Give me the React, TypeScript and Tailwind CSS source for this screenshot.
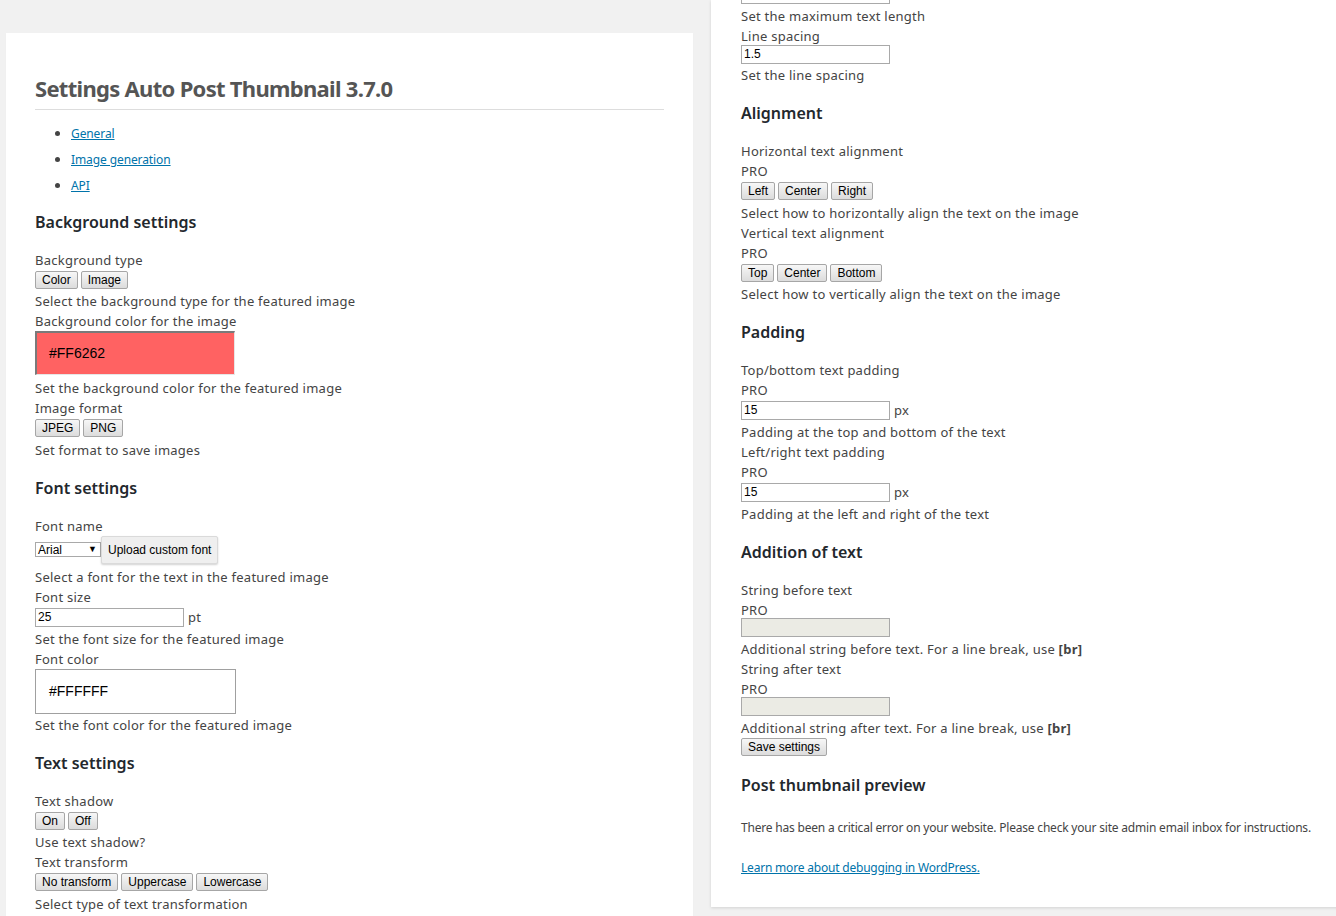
import React from 'react';

const body = "font-['Noto_Sans',sans-serif]";
const arial = "font-['Liberation_Sans',Arial,sans-serif]";

const Line: React.FC<{ children: React.ReactNode }> = ({ children }) => (
  <div className="h-5 leading-5 whitespace-nowrap tracking-[0.25px]">{children}</div>
);

const Heading: React.FC<{ children: React.ReactNode }> = ({ children }) => (
  <div className="h-[56px] flex items-center text-[16px] font-semibold text-[#23282d]">{children}</div>
);

const Btn: React.FC<{ children: React.ReactNode }> = ({ children }) => (
  <button
    className={`h-[18px] px-[6px] border border-[#a6a6a6] rounded-[2px] bg-linear-to-b from-[#f7f7f7] to-[#dcdcdc] text-[12px] leading-none text-black ${arial}`}
  >
    {children}
  </button>
);

const ButtonRow: React.FC<{ items: string[]; h?: string }> = ({ items, h = 'h-[21.5px]' }) => (
  <div className={`${h} pt-px flex gap-[3px]`}>
    {items.map((item) => (
      <Btn key={item}>{item}</Btn>
    ))}
  </div>
);

const InputRow: React.FC<{ value?: string; unit?: string; disabled?: boolean; h?: string }> = ({
  value = '',
  unit,
  disabled,
  h = 'h-[22px] pt-px',
}) => (
  <div className={`${h} flex items-start`}>
    <div
      className={`w-[149px] h-[19px] shrink-0 border border-[#a9a9a9] px-[2px] text-[12px] leading-[17px] text-black ${arial} ${
        disabled ? 'bg-[#ebebe4]' : 'bg-white'
      }`}
    >
      {value}
    </div>
    {unit && <span className="ml-[4px] leading-[19px] tracking-[0.25px]">{unit}</span>}
  </div>
);

const LeftPanel = () => (
  <div className="ml-[6px] mt-[33px] w-[687px] shrink-0 bg-white px-[29px] pt-[40px] pb-10 shadow-[0_1px_1px_rgba(0,0,0,0.04)]">
    <h1 className="h-[30px] leading-[30px] text-[22px] tracking-[-0.7px] font-bold text-[#555] whitespace-nowrap">
      Settings Auto Post Thumbnail 3.7.0
    </h1>
    <div className="mt-[6px] border-b border-[#dddddd]" />
    <ul className="mt-[10px] list-disc pl-[36px] text-[12px] tracking-[-0.1px] marker:text-[#444] marker:text-[13px]">
      {['General', 'Image generation', 'API'].map((l) => (
        <li key={l} className="h-[26px] leading-[26px]">
          <a href="#" className="text-[#0073aa] underline">
            {l}
          </a>
        </li>
      ))}
    </ul>
    <div className="h-[52px] pb-[4px] flex items-center text-[16px] font-semibold text-[#23282d]">
      Background settings
    </div>
    <Line>Background type</Line>
    <ButtonRow items={['Color', 'Image']} h="h-[21px]" />
    <Line>Select the background type for the featured image</Line>
    <Line>Background color for the image</Line>
    <div
      className={`w-[200px] h-[44px] mb-[3px] bg-[#ff6262] border-t-2 border-l-2 border-t-[#7a7a7a] border-l-[#7a7a7a] border-r border-b border-r-[#e6e6e6] border-b-[#e6e6e6] pl-[12px] flex items-center text-[14px] text-black ${arial}`}
    >
      #FF6262
    </div>
    <Line>Set the background color for the featured image</Line>
    <Line>Image format</Line>
    <ButtonRow items={['JPEG', 'PNG']} />
    <Line>Set format to save images</Line>

    <Heading>Font settings</Heading>
    <Line>Font name</Line>
    <div className="h-[31px] flex items-start">
      <div className="h-[28px] flex items-center">
        <div
          className={`w-[66px] h-[15px] border border-[#a9a9a9] bg-white flex items-center justify-between pl-[2px] pr-[3px] text-[12px] text-black ${arial}`}
        >
          <span>Arial</span>
          <span className="text-[9px]">▼</span>
        </div>
      </div>
      <button
        className={`h-[28px] px-[6px] bg-[#efefef] border border-[#dadada] rounded-[2px] shadow-[0_1px_2px_rgba(0,0,0,0.18)] text-[12px] text-black ${arial}`}
      >
        Upload custom font
      </button>
    </div>
    <Line>Select a font for the text in the featured image</Line>
    <Line>Font size</Line>
    <InputRow value="25" unit="pt" />
    <Line>Set the font size for the featured image</Line>
    <Line>Font color</Line>
    <div
      className={`w-[201px] h-[45px] mb-[1px] border border-[#a0a0a0] bg-white pl-[13px] flex items-center text-[14px] text-black ${arial}`}
    >
      #FFFFFF
    </div>
    <Line>Set the font color for the featured image</Line>

    <Heading>Text settings</Heading>
    <Line>Text shadow</Line>
    <ButtonRow items={['On', 'Off']} />
    <Line>Use text shadow?</Line>
    <Line>Text transform</Line>
    <ButtonRow items={['No transform', 'Uppercase', 'Lowercase']} />
    <Line>Select type of text transformation</Line>
  </div>
);

const RightPanel = () => (
  <div className="ml-[18px] w-[640px] shrink-0 bg-white px-[30px] pb-[29px] shadow-[0_1px_3px_rgba(0,0,0,0.13)]">
    <div className="-mt-[15px]">
      <InputRow h="h-[21px]" />
      <Line>Set the maximum text length</Line>
      <Line>Line spacing</Line>
      <InputRow value="1.5" h="h-[20px] -mt-px" />
      <Line>Set the line spacing</Line>

      <Heading>Alignment</Heading>
      <Line>Horizontal text alignment</Line>
      <Line>PRO</Line>
      <ButtonRow items={['Left', 'Center', 'Right']} />
      <Line>Select how to horizontally align the text on the image</Line>
      <Line>Vertical text alignment</Line>
      <Line>PRO</Line>
      <ButtonRow items={['Top', 'Center', 'Bottom']} />
      <Line>Select how to vertically align the text on the image</Line>

      <Heading>Padding</Heading>
      <Line>Top/bottom text padding</Line>
      <Line>PRO</Line>
      <InputRow value="15" unit="px" />
      <Line>Padding at the top and bottom of the text</Line>
      <Line>Left/right text padding</Line>
      <Line>PRO</Line>
      <InputRow value="15" unit="px" />
      <Line>Padding at the left and right of the text</Line>

      <Heading>Addition of text</Heading>
      <Line>String before text</Line>
      <Line>PRO</Line>
      <InputRow disabled h="h-5 -mt-[2px] mb-px" />
      <Line>
        Additional string before text. For a line break, use <b className="font-bold">[br]</b>
      </Line>
      <Line>String after text</Line>
      <Line>PRO</Line>
      <InputRow disabled h="h-5 -mt-[2px] mb-px" />
      <Line>
        Additional string after text. For a line break, use <b className="font-bold">[br]</b>
      </Line>
      <div className="h-[19px] flex items-start">
        <Btn>Save settings</Btn>
      </div>

      <Heading>Post thumbnail preview</Heading>
      <p className="mt-[5px] text-[12px] leading-5 tracking-[-0.2px] whitespace-nowrap text-[#444]">
        There has been a critical error on your website. Please check your site admin email inbox for instructions.
      </p>
      <p className="mt-5 text-[12px] leading-5 tracking-[-0.2px]">
        <a href="#" className="text-[#0073aa] underline">
          Learn more about debugging in WordPress.
        </a>
      </p>
    </div>
  </div>
);

export default function App() {
  return (
    <div className={`h-[916px] overflow-hidden bg-[#f1f1f1] flex items-start text-[13px] text-[#444] ${body}`}>
      <LeftPanel />
      <RightPanel />
    </div>
  );
}
